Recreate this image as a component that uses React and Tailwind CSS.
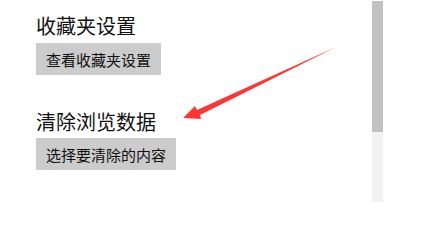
export default function App() {
  return (
    <div
      className="relative w-[440px] h-[233px] bg-white overflow-hidden"
      style={{ fontFamily: '"Noto Sans CJK SC", "Noto Sans", sans-serif' }}
    >
      <div className="flex">
        <div className="w-[372px] flex flex-col items-start pt-[16px] pl-[36px] text-[#111]">
          <h2 className="text-[20px] leading-[20px] h-[20px]">收藏夹设置</h2>
          <button className="mt-[7px] h-[32px] px-[10px] bg-[#cccccc] text-[15px] leading-[15px] flex items-center">
            查看收藏夹设置
          </button>
          <h2 className="mt-[37px] text-[20px] leading-[20px] h-[20px]">清除浏览数据</h2>
          <button className="mt-[6px] h-[32px] px-[10px] bg-[#cccccc] text-[15px] leading-[15px] flex items-center">
            选择要清除的内容
          </button>
        </div>
        <div className="mt-px w-[11px] h-[201px] flex flex-col bg-[#f2f2f2]">
          <div className="h-[131px] bg-[#c2c2c2]" />
        </div>
      </div>
      <svg className="absolute left-0 top-0" width="440" height="233" viewBox="0 0 440 233">
        <polygon
          points="183,118 195,106 197,110 336,47 200,115 201,119"
          fill="#ff3535"
        />
      </svg>
    </div>
  );
}
